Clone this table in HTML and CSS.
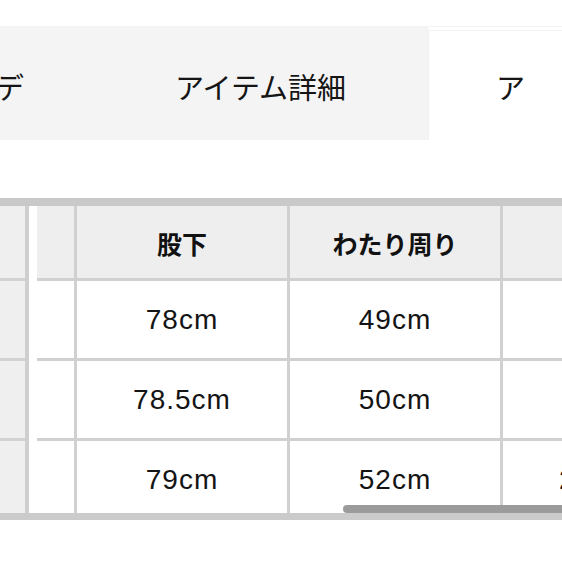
FILE: index.html
```html
<!DOCTYPE html>
<html lang="ja">
<head>
<meta charset="utf-8">
<link rel="stylesheet" href="styles.css">
</head>
<body>
  <nav class="tabs">
    <div class="tab tab-side"><span class="tab-label-end">スタッフコーデ</span></div>
    <div class="tab tab-main">アイテム詳細</div>
    <div class="tab tab-active"><span class="tab-label-start">ア</span></div>
  </nav>

  <section class="size-table">
    <div class="fixed-col">
      <div class="fcell fhead"></div>
      <div class="fcell"></div>
      <div class="fcell"></div>
      <div class="fcell flast"></div>
    </div>
    <div class="scroll">
      <div class="grid">
        <div class="cell head"></div>
        <div class="cell head">股下</div>
        <div class="cell head">わたり周り</div>
        <div class="cell head">裾幅</div>

        <div class="cell"></div>
        <div class="cell">78cm</div>
        <div class="cell">49cm</div>
        <div class="cell">20cm</div>

        <div class="cell"></div>
        <div class="cell">78.5cm</div>
        <div class="cell">50cm</div>
        <div class="cell">21cm</div>

        <div class="cell last"></div>
        <div class="cell last">79cm</div>
        <div class="cell last">52cm</div>
        <div class="cell last">21.5cm</div>
      </div>
    </div>
    <div class="scrollbar"></div>
  </section>
</body>
</html>
```

FILE: styles.css
```css
html, body {
  margin: 0;
  padding: 0;
  background: #ffffff;
}

body {
  width: 562px;
  height: 562px;
  overflow: hidden;
  font-family: "Liberation Sans", "Noto Sans CJK JP", sans-serif;
  color: #111111;
}

.tabs {
  margin-top: 26px;
  height: 114px;
  display: flex;
  border-top: 1px solid #f3f3f3;
  box-sizing: border-box;
}

.tab {
  height: 100%;
  display: flex;
  align-items: center;
  font-family: "Noto Sans CJK JP", sans-serif;
  font-size: 29px;
  color: #151515;
  padding-top: 4px;
  box-sizing: border-box;
  white-space: nowrap;
}

.tab-side {
  width: 92px;
  background: #f4f4f4;
  justify-content: flex-end;
  padding-right: 68px;
  overflow: hidden;
}

.tab-main {
  width: 336px;
  background: #f4f4f4;
  justify-content: center;
  padding-left: 1px;
}

.tab-active {
  flex: 1;
  background: #ffffff;
  margin-top: 3px;
  height: calc(100% - 3px);
  border-left: 1px solid #f0f0f0;
  border-top: 1px solid #f4f4f4;
  padding-left: 67px;
  padding-top: 1px;
}

.size-table {
  margin-top: 58px;
  position: relative;
  display: flex;
  border-top: 8px solid #c9c9c9;
  border-bottom: 7px solid #cbcbcb;
  overflow: hidden;
}

.fixed-col {
  width: 25px;
  flex: none;
  display: grid;
  grid-template-rows: 72px 77px 77px 72px;
  row-gap: 3px;
  background: #d2d2d2;
  border-right: 4px solid #cfcfcf;
}

.fcell {
  background: #efefef;
}

.scroll {
  margin-left: 8px;
  flex: 1;
  overflow: hidden;
}

.grid {
  display: grid;
  grid-template-columns: 37px 210px 210px 210px;
  grid-template-rows: 72px 77px 77px 72px;
  gap: 3px;
  background: #d0d0d0;
  width: max-content;
}

.cell {
  background: #ffffff;
  display: flex;
  align-items: center;
  justify-content: center;
  font-size: 28px;
  letter-spacing: 1px;
  color: #141414;
  white-space: nowrap;
}

.cell.head {
  background: #eeeeee;
  font-family: "Noto Sans CJK JP", sans-serif;
  font-weight: 700;
  font-size: 25px;
  letter-spacing: 0;
  color: #111111;
  padding-top: 2px;
  box-sizing: border-box;
}

.cell.last {
  padding-top: 6px;
  box-sizing: border-box;
}

.scrollbar {
  position: absolute;
  left: 343px;
  right: -10px;
  bottom: 0;
  height: 8px;
  border-radius: 4px;
  background: #9b9b9b;
}
```
